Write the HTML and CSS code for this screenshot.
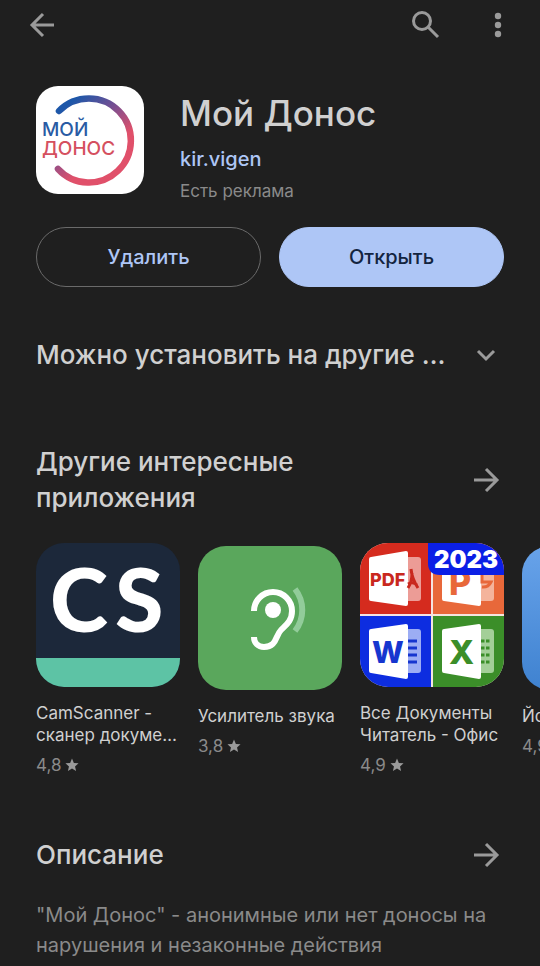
FILE: index.html
```html
<!DOCTYPE html>
<html lang="ru">
<head>
  <meta charset="UTF-8" />
  <meta name="viewport" content="width=device-width, initial-scale=1.0"/>
  <title>Мой Донос</title>
  <link rel="stylesheet" href="styles.css">
</head>
<body>
  <header class="topbar">
    <button class="icon-btn" aria-label="Назад">
      <svg width="28" height="28" viewBox="0 0 28 28"><path d="M26 14H4M15 3L4 14l11 11"/></svg>
    </button>
    <div class="topbar-right">
      <button class="icon-btn" aria-label="Поиск">
        <svg width="28" height="28" viewBox="0 0 28 28"><circle cx="10" cy="10" r="8.500"/><path d="M16 16l10 10"/></svg>
      </button>
      <button class="icon-btn" aria-label="Ещё">
        <svg class="dots" width="28" height="28" viewBox="0 0 28 28"><circle cx="14" cy="5" r="3.2"/><circle cx="14" cy="14" r="3.2"/><circle cx="14" cy="23" r="3.2"/></svg>
      </button>
    </div>
  </header>

  <main>
    <section class="app-head">
      <svg class="app-logo" viewBox="0 0 108 108">
        <defs>
          <linearGradient id="ring" gradientUnits="userSpaceOnUse" x1="23" y1="20" x2="80" y2="90">
            <stop offset="0.05" stop-color="#1d57a9"/>
            <stop offset="0.4" stop-color="#7d4f90"/>
            <stop offset="0.72" stop-color="#e0506a"/>
          </linearGradient>
        </defs>
        <rect width="108" height="108" fill="#fff"/>
        <path d="M23 25A42 42 0 1 1 22 83" fill="none" stroke="url(#ring)" stroke-width="6.5" stroke-linecap="round"/>
        <text x="6" y="50" fill="#2a5ba4">МОЙ</text>
        <text x="6" y="69" fill="#d5505f">ДОНОС</text>
      </svg>
      <div>
        <h1>Мой Донос</h1>
        <a class="developer" href="#">kir.vigen</a>
        <div class="ads">Есть реклама</div>
      </div>
    </section>

    <div class="actions">
      <button class="btn">Удалить</button>
      <button class="btn btn-primary">Открыть</button>
    </div>

    <section class="row devices">
      <h2>Можно установить на другие …</h2>
      <button class="icon-btn" aria-label="Показать устройства">
        <svg width="28" height="28" viewBox="0 0 28 28"><path d="M6 10l8 8 8-8"/></svg>
      </button>
    </section>

    <section class="row similar">
      <h2>Другие интересные приложения</h2>
      <button class="icon-btn" aria-label="Другие приложения">
        <svg width="28" height="28" viewBox="0 0 28 28"><path d="M2 14h22M14 3l11 11-11 11"/></svg>
      </button>
    </section>

    <div class="apps">
      <a class="app" href="#">
        <svg class="app-icon" viewBox="0 0 144 144">
          <rect width="144" height="144" fill="#1c283a"/>
          <rect y="115" width="144" height="29" fill="#5dc3a5"/>
          <text class="cs" x="14 79" y="89">CS</text>
        </svg>
        <div class="app-name">CamScanner - сканер докуме…</div>
        <div class="rating">4,8 <svg width="14" height="14" viewBox="0 0 24 24"><path d="M12 1l3.2 7.4 8 .7-6 5.3 1.8 7.9-7-4.2-7 4.2 1.8-7.9-6-5.3 8-.7z"/></svg></div>
      </a>
      <a class="app app-short" href="#">
        <svg class="app-icon" viewBox="0 0 144 144">
          <rect width="144" height="144" fill="#5aa75c"/>
          <g fill="none" stroke-width="6">
            <path d="M56 65A19 19 0 0 1 94 65C94 75 88 79 83 84C77 90 79 101 66 101C60 101 56 97 56 91" stroke="#fff"/>
            <path d="M97 43A34 34 0 0 1 97 85" stroke="#92cc9a"/>
          </g>
          <circle cx="75" cy="64" r="8" fill="#fff"/>
        </svg>
        <div class="app-name">Усилитель звука</div>
        <div class="rating">3,8 <svg width="14" height="14" viewBox="0 0 24 24"><path d="M12 1l3.2 7.4 8 .7-6 5.3 1.8 7.9-7-4.2-7 4.2 1.8-7.9-6-5.3 8-.7z"/></svg></div>
      </a>
      <a class="app" href="#">
        <svg class="app-icon office" viewBox="0 0 144 144">
          <rect width="144" height="144" fill="#f5e4e0"/>
          <rect width="71" height="71" fill="#d52b1e"/>
          <rect x="73" width="71" height="71" fill="#e8683a"/>
          <rect y="73" width="71" height="71" fill="#0d2de0"/>
          <rect x="73" y="73" width="71" height="71" fill="#3b8e29"/>
          <!-- pdf -->
          <path d="M48 14h10q3 0 3 3v38q0 3-3 3H48z" fill="#ec9c96"/>
          <path d="M11 14L46 8q2 0 2 2v51q0 2-2 2L11 58q-2 0-2-2V16q0-2 2-2z" fill="#fff"/>
          <path d="M51 26q1 10 7 19M52 30q0 9-4 15M48 41q5-3 9 1" fill="none" stroke="#c9281e" stroke-width="3"/>
          <text x="10" y="43" font-size="18" fill="#c9281e">PDF</text>
          <!-- powerpoint -->
          <path d="M121 20h10q3 0 3 3v32q0 3-3 3h-10z" fill="#f4b49c"/>
          <path d="M84 14l35-6q2 0 2 2v51q0 2-2 2L84 58q-2 0-2-2V16q0-2 2-2z" fill="#fff"/>
          <path d="M122 31v8h9a9 9 0 0 1-9 5" fill="none" stroke="#e8683a" stroke-width="3"/>
          <text x="89" y="52" font-size="34" fill="#e8683a">P</text>
          <!-- word -->
          <path d="M48 86h10q3 0 3 3v38q0 3-3 3H48z" fill="#9cadf4"/>
          <path d="M11 86l35-5q2 0 2 2v51q0 2-2 2l-35-6q-2 0-2-2V88q0-2 2-2z" fill="#fff"/>
          <path d="M48 98h9M48 105h9M48 112h9M48 119h9" stroke="#1636cf" stroke-width="3"/>
          <text x="12" y="120" font-size="30" fill="#1636cf">W</text>
          <!-- excel -->
          <path d="M121 86h10q3 0 3 3v38q0 3-3 3h-10z" fill="#a3cf98"/>
          <path d="M84 86l35-5q2 0 2 2v51q0 2-2 2l-35-6q-2 0-2-2V88q0-2 2-2z" fill="#fff"/>
          <path d="M121 98h9M121 105h9M121 112h9M121 119h9" stroke="#3b8e29" stroke-width="3" stroke-dasharray="3.5 1.5"/>
          <text x="89" y="121" font-size="33" fill="#3b8e29">X</text>
          <path d="M68 0h76v32H80q-12 0-12-12z" fill="#0b1fe6"/>
          <text class="year" x="74" y="25">2023</text>
        </svg>
        <div class="app-name">Все Документы Читатель - Офис</div>
        <div class="rating">4,9 <svg width="14" height="14" viewBox="0 0 24 24"><path d="M12 1l3.2 7.4 8 .7-6 5.3 1.8 7.9-7-4.2-7 4.2 1.8-7.9-6-5.3 8-.7z"/></svg></div>
      </a>
      <a class="app app-short" href="#">
        <div class="app-icon app-icon-blue"></div>
        <div class="app-name">Йога</div>
        <div class="rating">4,9</div>
      </a>
    </div>

    <section class="row about">
      <h2>Описание</h2>
      <button class="icon-btn" aria-label="Подробнее">
        <svg width="28" height="28" viewBox="0 0 28 28"><path d="M2 14h22M14 3l11 11-11 11"/></svg>
      </button>
    </section>
    <p class="description">"Мой Донос" - анонимные или нет доносы на нарушения и незаконные действия</p>
  </main>
</body>
</html>
```
FILE: styles.css
```css
:root {
  --bg: #1f1f1f;
  --text: #d0d0d0;
  --muted: #8a8a8a;
  --icon: #9a9a9a;
  --accent: #aec6f6;
}

* {
  box-sizing: border-box;
}

body {
  margin: 0;
  font-family: Inter, Roboto, sans-serif;
  background-color: var(--bg);
  color: var(--text);
  overflow-x: hidden;
}

h1, h2, p {
  margin: 0;
  font-weight: 500;
}

a {
  color: inherit;
  text-decoration: none;
}

button {
  font-family: inherit;
  cursor: pointer;
}

.topbar {
  display: flex;
  justify-content: space-between;
  align-items: center;
  height: 50px;
  padding: 0 28px;
}

.topbar-right {
  display: flex;
  gap: 44px;
}

.icon-btn {
  flex: none;
  display: block;
  padding: 0;
  border: none;
  background: none;
}

.icon-btn svg {
  display: block;
  fill: none;
  stroke: var(--icon);
  stroke-width: 3;
}

.icon-btn .dots {
  fill: var(--icon);
  stroke: none;
}

main {
  padding: 36px 36px 0;
}

.app-head {
  display: flex;
  gap: 36px;
}

.app-logo {
  flex: none;
  width: 108px;
  height: 108px;
  border-radius: 22px;
  font-size: 19px;
  font-weight: 500;
}

h1 {
  font-size: 35px;
  line-height: 54px;
}

.developer {
  display: block;
  font-size: 20px;
  line-height: 38px;
  font-weight: 500;
  color: var(--accent);
}

.ads {
  font-size: 17px;
  line-height: 26px;
  color: var(--muted);
}

.actions {
  display: flex;
  gap: 18px;
  margin-top: 23px;
}

.btn {
  flex: 1;
  height: 60px;
  border: 1px solid #6a6a6a;
  border-radius: 30px;
  background: none;
  color: var(--accent);
  font-size: 20px;
  font-weight: 500;
}

.btn-primary {
  border-color: var(--accent);
  background: var(--accent);
  color: #13243f;
}

.row {
  display: flex;
  justify-content: space-between;
  align-items: center;
  padding-right: 4px;
}

h2 {
  font-size: 26px;
  line-height: 36px;
  white-space: nowrap;
}

.devices {
  margin-top: 50px;
}

.similar {
  margin-top: 71px;
}

.similar h2 {
  max-width: 300px;
  white-space: normal;
}

.apps {
  display: grid;
  grid-auto-flow: column;
  grid-auto-columns: 144px;
  gap: 18px;
  margin: 27px -36px 0 0;
  overflow: hidden;
}

.app-short {
  padding-top: 3px;
}

.app-icon {
  display: block;
  width: 144px;
  height: 144px;
  border-radius: 28px;
}

.app-icon-blue {
  background: linear-gradient(#68a3ea, #3f82d0);
}

.cs {
  font-family: Lato, sans-serif;
  font-size: 88px;
  font-weight: 900;
  fill: #fff;
}

.office text {
  font-weight: 800;
}

.office .year {
  font-size: 24px;
  font-weight: 900;
  fill: #fff;
}

.app-name {
  margin-top: 15px;
  font-size: 17px;
  line-height: 22px;
}

.rating {
  display: flex;
  align-items: center;
  gap: 4px;
  margin-top: 8px;
  font-size: 17px;
  line-height: 22px;
  color: var(--muted);
}

.rating svg {
  fill: var(--icon);
}

.about {
  margin-top: 61px;
}

.description {
  margin-top: 27px;
  font-size: 20px;
  line-height: 30px;
  font-weight: 400;
  color: var(--muted);
}
```
